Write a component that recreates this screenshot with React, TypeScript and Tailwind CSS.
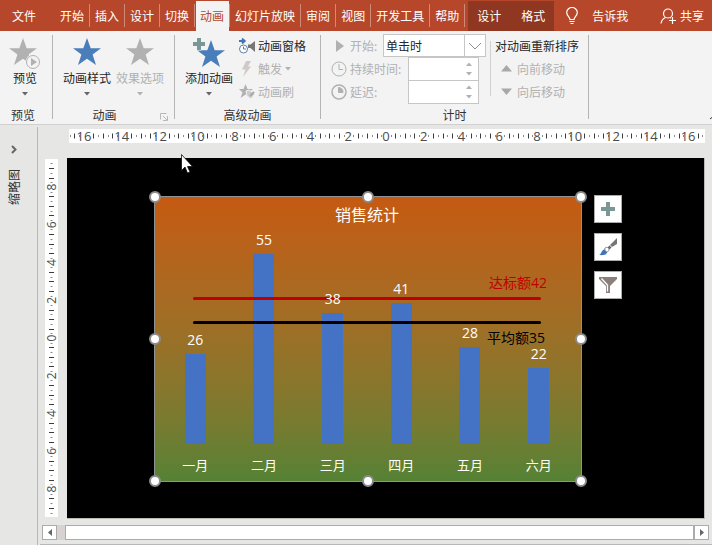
import type { ReactNode } from "react";
import clsx from "clsx";

const tabs = ["开始", "插入", "设计", "切换", "动画", "幻灯片放映", "审阅", "视图", "开发工具", "帮助"];

const sales = [
  { month: "一月", value: 26 },
  { month: "二月", value: 55 },
  { month: "三月", value: 38 },
  { month: "四月", value: 41 },
  { month: "五月", value: 28 },
  { month: "六月", value: 22 }
];

const handles = [
  "left-0 top-0",
  "left-1/2 top-0",
  "left-full top-0",
  "left-0 top-1/2",
  "left-full top-1/2",
  "left-0 top-full",
  "left-1/2 top-full",
  "left-full top-full"
];

const STAR = "M14 0l3.7 10.3H28l-8.4 6.2L23 27l-9-6.3L5 27l3.4-10.5L0 10.3h10.3z";

function Star({ className }: { className: string }) {
  return (
    <svg width="28" height="28" viewBox="0 0 28 28" className={className} aria-hidden="true">
      <path d={STAR} fill="currentColor" />
    </svg>
  );
}

function PreviewIcon() {
  return (
    <svg width="32" height="32" viewBox="0 0 32 32" aria-hidden="true">
      <path d={STAR} fill="#b1b1b1" />
      <circle cx="24" cy="24" r="7.5" fill="#f3f3f3" />
      <circle cx="24" cy="24" r="6.5" fill="#f3f3f3" stroke="#b1b1b1" />
      <path d="M22 20v8l6-4z" fill="#b1b1b1" />
    </svg>
  );
}

function AddAnimationIcon() {
  return (
    <svg width="32" height="30" viewBox="0 0 32 30" aria-hidden="true">
      <path d={STAR} transform="translate(4 2)" fill="#4a7ebb" />
      <path d="M3.5-.5h5v4h4v5h-4v4h-5v-4h-4v-5h4z" fill="#f3f3f3" />
      <path d="M4 0h4v4h4v4H8v4H4V8H0V4h4z" fill="#7a9797" />
    </svg>
  );
}

function PaneIcon() {
  return (
    <svg width="16" height="16" viewBox="0 0 16 16" fill="none" aria-hidden="true">
      <path d="M0 3h5M3 .5L5.8 3 3 5.5" stroke="#3f74b5" strokeWidth="1.8" />
      <circle cx="4.5" cy="11" r="4" fill="#fff" stroke="#5a80a8" />
      <path d="M4.5 8.5V11H7" stroke="#5a80a8" />
      <path d="M9 6.5h2.5L16 3v11l-4.5-4H9z" fill="#767676" />
    </svg>
  );
}

function BoltIcon() {
  return (
    <svg width="16" height="16" viewBox="0 0 16 16" aria-hidden="true">
      <path d="M7 0h5L9 5.5h3L4 16l2.5-7.5H3z" fill="#cfcac8" />
    </svg>
  );
}

function PainterIcon() {
  return (
    <svg width="16" height="16" viewBox="0 0 16 16" aria-hidden="true">
      <path d="M6.5 0l2 5H14l-4.5 3.5 2 5.5-5-3.5-5 3.5 2-5.5L0 5h4.5z" fill="#b1b1b1" />
      <path d="M7 7l3-1 6 4-4 5-4-3z" fill="#cfcac8" stroke="#f3f3f3" />
      <path d="M11 12l4-4" stroke="#a8a8a8" strokeWidth="2" />
    </svg>
  );
}

function ClockIcon({ filled }: { filled?: boolean }) {
  return (
    <svg width="16" height="16" viewBox="0 0 16 16" fill="none" stroke="#b1b1b1" aria-hidden="true">
      <circle cx="8" cy="8" r="7" strokeWidth={filled ? 1.5 : 1} />
      {filled ? <path d="M7.5 3.5a4.5 4.5 0 0 1 4.5 5H7.5z" fill="#b1b1b1" /> : <path d="M8 3v5.5h4" />}
    </svg>
  );
}

function BulbIcon() {
  return (
    <svg width="12" height="18" viewBox="0 0 12 18" fill="none" stroke="#fff" aria-hidden="true">
      <path d="M4 12.5C4 10 .7 9 .7 5.5a5.3 5 0 0 1 10.6 0C11.3 9 8 10 8 12.5z" strokeWidth="1.2" />
      <path d="M3.5 14.5h5M4.5 16.5h3" strokeWidth="1.2" />
    </svg>
  );
}

function Caret({ className }: { className?: string }) {
  return (
    <svg width="6" height="4" viewBox="0 0 6 4" className={className} aria-hidden="true">
      <path d="M0 0h6L3 3.5z" fill="currentColor" />
    </svg>
  );
}

function BigButton({ icon, label, disabled }: { icon: ReactNode; label: string; disabled?: boolean }) {
  return (
    <button disabled={disabled} className={clsx("flex flex-col items-center", disabled ? "text-[#b1b1b1]" : "text-[#262626]")}>
      <span className="flex h-8 items-start">{icon}</span>
      <span className="h-4 leading-4">{label}</span>
      <Caret className={clsx("mt-[6px]", !disabled && "text-[#666666]")} />
    </button>
  );
}

function SmallButton({ icon, label, disabled, caret }: { icon: ReactNode; label: string; disabled?: boolean; caret?: boolean }) {
  return (
    <button disabled={disabled} className={clsx("flex h-[23px] items-center gap-[3px]", disabled ? "text-[#b1b1b1]" : "text-[#262626]")}>
      {icon}
      {label}
      {caret && <Caret />}
    </button>
  );
}

function Group({ title, launcher, className, children }: { title: string; launcher?: boolean; className?: string; children: ReactNode }) {
  return (
    <section className={clsx("flex flex-col justify-between", className)}>
      {children}
      <div className="flex h-[18px] items-center">
        <h2 className="flex-1 text-center leading-4 text-[#333333]">{title}</h2>
        {launcher && (
          <button aria-label={title} className="flex w-[18px] items-center pt-1 pl-1">
            <svg width="8" height="8" viewBox="0 0 8 8" fill="none" stroke="#b8b8b8" aria-hidden="true">
              <path d="M.5 6.5v-6h6M3 3l4 4M7.5 3v4.5H3" />
            </svg>
          </button>
        )}
      </div>
    </section>
  );
}

function Divider() {
  return <div className="mt-1 mb-[5px] w-px bg-[#b5b5b5]" />;
}

function TimeField({ id, label, icon }: { id: string; label: string; icon: ReactNode }) {
  return (
    <div className="flex h-[23px] items-center">
      {icon}
      <label htmlFor={id} className="w-[61px] pl-[3px]">{label}</label>
      <div className="flex h-6 w-[71px] border border-[#c6c6c6] bg-white">
        <input id={id} disabled className="w-0 flex-1" />
        <div className="flex w-3 flex-col justify-between py-1">
          <button disabled aria-label={`${label} +`}>
            <Caret className="rotate-180" />
          </button>
          <button disabled aria-label={`${label} -`}>
            <Caret />
          </button>
        </div>
      </div>
    </div>
  );
}

function TabBar() {
  return (
    <header className="flex h-[31px] items-stretch bg-[#b7472a] whitespace-nowrap text-white">
      <button className="pr-[19px] pl-3">文件</button>
      <nav className="flex">
        {tabs.map((tab) => (
          <div key={tab} className="flex items-center">
            {tab === "动画" ? (
              <button className="mt-px ml-px h-[30px] self-end bg-[#f3f3f3] pr-[5px] pl-1 text-[#b7472a]">{tab}</button>
            ) : (
              <button className="h-full px-[5px]">{tab}</button>
            )}
            <span className="h-[23px] w-px bg-[#d08a76]" />
          </div>
        ))}
      </nav>
      <div className="mt-px ml-[3px] flex gap-5 bg-[#8f3721] px-[9px]">
        <button>设计</button>
        <button>格式</button>
      </div>
      <button className="ml-3 flex items-center gap-[14px]">
        <BulbIcon />
        告诉我
      </button>
      <button className="mr-2 ml-auto flex items-center gap-1">
        <svg width="16" height="16" viewBox="0 0 16 16" fill="none" stroke="#fff" aria-hidden="true">
          <circle cx="8" cy="5.5" r="4.5" strokeWidth="1.2" />
          <path d="M1 15.500C1.500 12 3 10.500 5.500 9.500M10 9.500l1 .6M9 12.500h7M12.500 9v7" strokeWidth="1.2" />
        </svg>
        共享
      </button>
    </header>
  );
}

function Ribbon() {
  return (
    <div className="relative flex h-[94px] overflow-hidden border-b border-[#d0d0d0] bg-[#f3f3f3] whitespace-nowrap">
      <Group title="预览" className="w-[52px] pt-[7px] pr-[6px]">
        <div className="flex justify-center pl-1">
          <BigButton icon={<PreviewIcon />} label="预览" />
        </div>
      </Group>
      <Divider />
      <Group title="动画" launcher className="w-[121px] pt-[7px]">
        <div className="flex gap-[5px] pl-[10px]">
          <BigButton icon={<Star className="text-[#4a7ebb]" />} label="动画样式" />
          <BigButton icon={<Star className="text-[#b1b1b1]" />} label="效果选项" disabled />
        </div>
      </Group>
      <Divider />
      <Group title="高级动画" className="w-[145px]">
        <div className="flex gap-[6px] pl-[10px]">
          <div className="pt-[7px]">
            <BigButton icon={<AddAnimationIcon />} label="添加动画" />
          </div>
          <div className="pt-[3px]">
            <SmallButton icon={<PaneIcon />} label="动画窗格" />
            <SmallButton icon={<BoltIcon />} label="触发" disabled caret />
            <SmallButton icon={<PainterIcon />} label="动画刷" disabled />
          </div>
        </div>
      </Group>
      <Divider />
      <Group title="计时" className="w-[267px]">
        <div className="flex pt-[3px] pl-[10px] text-[#b1b1b1]">
          <div className="w-[155px]">
            <div className="flex h-[23px] items-center">
              <svg width="16" height="16" viewBox="0 0 16 16" aria-hidden="true">
                <path d="M5 2v12l8-6z" fill="#b1b1b1" />
              </svg>
              <label htmlFor="start" className="w-9 pl-[3px]">开始:</label>
              <div className="relative h-[23px] flex-1 border border-[#c6c6c6] bg-white">
                <select id="start" className="block h-full w-full appearance-none pl-[2px] text-[#262626]">
                  <option>单击时</option>
                </select>
                <svg width="21" height="21" viewBox="0 0 21 21" fill="none" className="pointer-events-none absolute top-0 right-0" aria-hidden="true">
                  <path d="M.5 0v21" stroke="#c6c6c6" />
                  <path d="M5 8l6 6 6-6" stroke="#8c8c8c" />
                </svg>
              </div>
            </div>
            <TimeField id="duration" label="持续时间:" icon={<ClockIcon />} />
            <TimeField id="delay" label="延迟:" icon={<ClockIcon filled />} />
          </div>
          <div className="mt-[7px] mb-[7px] ml-1 w-px bg-[#d0d0d0]" />
          <div className="pl-1">
            <div className="flex h-[23px] items-center text-[#262626]">对动画重新排序</div>
            <button disabled className="flex h-[23px] items-center gap-[5px] pl-[6px]">
              <svg width="11" height="7" viewBox="0 0 11 7" aria-hidden="true">
                <path d="M5.5 0L11 6.5H0z" fill="#a8a8a8" />
              </svg>
              向前移动
            </button>
            <button disabled className="flex h-[23px] items-center gap-[5px] pl-[6px]">
              <svg width="11" height="7" viewBox="0 0 11 7" aria-hidden="true">
                <path d="M0 .5h11L5.5 7z" fill="#a8a8a8" />
              </svg>
              向后移动
            </button>
          </div>
        </div>
      </Group>
      <Divider />
      <svg width="10" height="6" viewBox="0 0 10 6" fill="none" className="absolute -right-2 bottom-1" aria-hidden="true">
        <path d="M0 5l5-4 5 4" stroke="#333" />
      </svg>
    </div>
  );
}

// 每格四分之一单位,每两个单位标一个数字
function Ruler({ vertical, max }: { vertical?: boolean; max: number }) {
  const marks = [];
  for (let i = -max * 4; i <= max * 4; i++) {
    const pos = i * 4.72;
    const isLabel = i % 8 === 0;
    const size = i % 2 === 0 ? 5 : 2;
    marks.push(
      isLabel ? (
        <text
          key={i}
          x={vertical ? 0 : pos}
          y={vertical ? 0 : 5}
          transform={vertical ? `translate(4 ${pos}) rotate(-90)` : undefined}
          textAnchor="middle"
          fontSize={vertical ? 12 : 13}
          fill="#4a4a4a"
        >
          {Math.abs(i / 4)}
        </text>
      ) : (
        <rect
          key={i}
          x={vertical ? -size / 2 : Math.round(pos)}
          y={vertical ? Math.round(pos) : -size / 2}
          width={vertical ? size : 1}
          height={vertical ? 1 : size}
          fill={size === 5 ? "#3c3c3c" : "#8a8a8a"}
        />
      )
    );
  }
  return (
    <svg width="100%" height="100%" overflow="visible" className="block overflow-visible font-['Open_Sans',sans-serif]" aria-hidden="true">
      <svg x="50%" y="50%" overflow="visible" className="overflow-visible">
        {vertical ? marks : <g transform="translate(-1 0)">{marks}</g>}
      </svg>
    </svg>
  );
}

function SalesChart() {
  return (
    <figure className="relative w-[428px] border border-[#8f9396] bg-[linear-gradient(to_bottom_in_srgb-linear,#c55a11,#548235)] pr-2 pl-[6px] font-['Open_Sans','Noto_Sans_CJK_SC',sans-serif] text-sm text-white">
      <figcaption className="pt-[6px] text-center text-base leading-6">销售统计</figcaption>
      <div className="relative grid h-[217px] grid-cols-6">
        {sales.map((item) => (
          <div key={item.month} className="flex flex-col items-center justify-end">
            <span className="relative z-10 mb-1 leading-5">{item.value}</span>
            <div className="w-[21px] bg-[#4472c4]" style={{ height: `${Math.round(item.value * 3.45)}px` }} />
          </div>
        ))}
        <div className="absolute inset-x-8 bottom-[144px] h-[3px] rounded-full bg-[#c00000]" />
        <div className="absolute inset-x-8 bottom-[120px] h-[3px] rounded-full bg-black" />
        <span className="absolute right-[26px] bottom-[151px] leading-5 text-[#c00000]">达标额42</span>
        <span className="absolute right-[28px] bottom-[96px] leading-5 text-black">平均额35</span>
      </div>
      <div className="grid grid-cols-6 pt-[11px] pb-[6px] text-center text-[13px] leading-5">
        {sales.map((item) => (
          <span key={item.month}>{item.month}</span>
        ))}
      </div>
      {handles.map((place) => (
        <span key={place} className={clsx("absolute size-3 -translate-1/2 rounded-full border-2 border-[#8c8c8c] bg-white", place)} />
      ))}
    </figure>
  );
}

function ChartButton({ label, children }: { label: string; children: ReactNode }) {
  return (
    <button aria-label={label} className="flex size-7 items-center justify-center border border-[#ababab] bg-white">
      <svg width="20" height="20" viewBox="0 0 20 20" aria-hidden="true">
        {children}
      </svg>
    </button>
  );
}

function Workspace() {
  return (
    <main className="flex min-w-0 flex-1 flex-col">
      <div className="mt-1 mr-[7px] ml-[31px] h-[14px] bg-white">
        <Ruler max={16.75} />
      </div>
      <div className="mt-[15px] mr-[7px] flex">
        <div className="mt-px mb-[2px] ml-[7px] w-[13px] bg-white">
          <div className="relative h-full">
            <div className="absolute inset-0">
              <Ruler vertical max={9.25} />
            </div>
          </div>
        </div>
        <div className="ml-[9px] flex flex-1 items-start gap-3 border-r border-b border-[#bcb8b4] bg-black pt-[38px] pb-9 pl-[87px]">
          <SalesChart />
          <div className="-mt-px flex flex-col gap-[10px]">
            <ChartButton label="图表元素">
              <path d="M8 3h4v5h5v4h-5v5H8v-5H3V8h5z" fill="#7a9797" />
            </ChartButton>
            <ChartButton label="图表样式">
              <path d="M19 1v6l-5 3-2-2z" fill="#767676" />
              <path d="M11.5 8.5l2 2-2 2-2-2z" fill="#666" />
              <path d="M7 11c2-1.500 4 0 4 1.500S9 16 6.500 15.500z" fill="#fff" stroke="#7a8a9a" />
              <path d="M1 18c3-1 2-5 5.500-5.500L9 15c0 3-4 3.500-8 3z" fill="#3f74b5" />
            </ChartButton>
            <ChartButton label="图表筛选器">
              <path d="M1 2h18v2l-7 7v7H8v-7L1 4z" fill="#8a7f7b" />
              <path d="M3.500 3.500L9.500 10v6.500" fill="none" stroke="#fff" strokeWidth="1.3" />
            </ChartButton>
          </div>
        </div>
      </div>
      <div className="mt-[6px] mr-[3px] ml-1 flex h-[15px]">
        <button aria-label="向左滚动" className="flex w-[15px] items-center justify-center border border-[#ababab] bg-white">
          <svg width="4" height="7" viewBox="0 0 4 7" aria-hidden="true">
            <path d="M4 0v7L0 3.5z" fill="#666" />
          </svg>
        </button>
        <div className="w-2 bg-[#d8d3d1]" />
        <div className="flex-1 border border-[#ababab] bg-white" />
        <button aria-label="向右滚动" className="flex w-[15px] items-center justify-center border border-[#ababab] bg-white">
          <svg width="4" height="7" viewBox="0 0 4 7" aria-hidden="true">
            <path d="M0 0v7l4-3.5z" fill="#666" />
          </svg>
        </button>
      </div>
      <div className="mt-auto ml-[2px] border-b border-[#b8b8b8]" />
    </main>
  );
}

export default function App() {
  return (
    <div className="relative flex min-h-screen flex-col overflow-hidden bg-[#e6e6e4] font-['Noto_Sans_CJK_SC',sans-serif] text-xs">
      <TabBar />
      <Ribbon />
      <div className="flex flex-1">
        <aside className="mt-[2px] flex w-[38px] flex-col items-center border-r border-[#b8b8b8] pt-[18px] pr-[9px]">
          <button aria-label="展开缩略图">
            <svg width="6" height="9" viewBox="0 0 6 9" fill="none" aria-hidden="true">
              <path d="M1 1l3.5 3.5L1 8" stroke="#666" strokeWidth="2" />
            </svg>
          </button>
          <span className="mt-[15px] rotate-180 text-[#333333] [text-orientation:sideways] [writing-mode:vertical-rl]">缩略图</span>
        </aside>
        <Workspace />
      </div>
      <svg width="12" height="20" viewBox="0 0 12 20" className="pointer-events-none absolute top-[154px] left-[181px]" aria-hidden="true">
        <path d="M.5.5v16l3.5-3.5 2.5 6 2.5-1-2.5-5.5h5z" fill="#fff" stroke="#111" strokeWidth=".8" />
      </svg>
    </div>
  );
}
